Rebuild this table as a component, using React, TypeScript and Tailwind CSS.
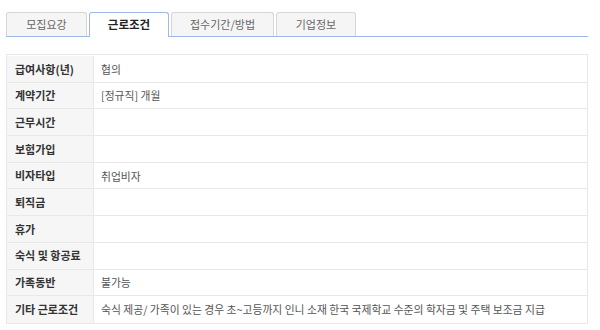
const tabs = [
  { label: "모집요강", width: "w-[81px]" },
  { label: "근로조건", width: "w-[80px]", active: true },
  { label: "접수기간/방법", width: "w-[103px]" },
  { label: "기업정보", width: "w-[80px]" },
];

const rows: { label: string; value?: string }[] = [
  { label: "급여사항(년)", value: "협의" },
  { label: "계약기간", value: "[정규직] 개월" },
  { label: "근무시간" },
  { label: "보험가입" },
  { label: "비자타입", value: "취업비자" },
  { label: "퇴직금" },
  { label: "휴가" },
  { label: "숙식 및 항공료" },
  { label: "가족동반", value: "불가능" },
  {
    label: "기타 근로조건",
    value: "숙식 제공/ 가족이 있는 경우 초~고등까지 인니 소재 한국 국제학교 수준의 학자금 및 주택 보조금 지급",
  },
];

export default function App() {
  return (
    <div className="h-[330px] w-[600px] bg-white px-[6px] pt-[12px] font-['Noto_Sans_CJK_KR',sans-serif]">
      <div className="flex w-[582px] gap-[2px] border-b border-[#9fb7e6]">
        {tabs.map((tab) =>
          tab.active ? (
            <div
              key={tab.label}
              className={`${tab.width} -mb-px flex h-[25px] items-center justify-center rounded-t-[3px] border border-b-0 border-[#9fb7e6] bg-white text-[11.5px] font-bold text-[#222]`}
            >
              {tab.label}
            </div>
          ) : (
            <div
              key={tab.label}
              className={`${tab.width} flex h-[24px] items-center justify-center rounded-t-[3px] border border-b-0 border-[#d6d6d6] bg-[#f5f5f5] text-[11px] text-[#666]`}
            >
              {tab.label}
            </div>
          )
        )}
      </div>

      <div className="mt-[17px] w-[582px] border border-[#e8e8e8] pt-px">
        {rows.map((row, i) => (
          <div
            key={row.label}
            className={`flex h-[26.7px] ${i < rows.length - 1 ? "border-b border-[#e8e8e8]" : ""}`}
          >
            <div className="flex w-[87px] shrink-0 items-center border-r border-[#e8e8e8] bg-[#f6f6f6] pl-[8px] text-[11px] font-bold text-[#333]">
              {row.label}
            </div>
            <div className="flex items-center whitespace-nowrap pl-[7px] text-[10.8px] text-[#555]">
              {row.value}
            </div>
          </div>
        ))}
      </div>
    </div>
  );
}
